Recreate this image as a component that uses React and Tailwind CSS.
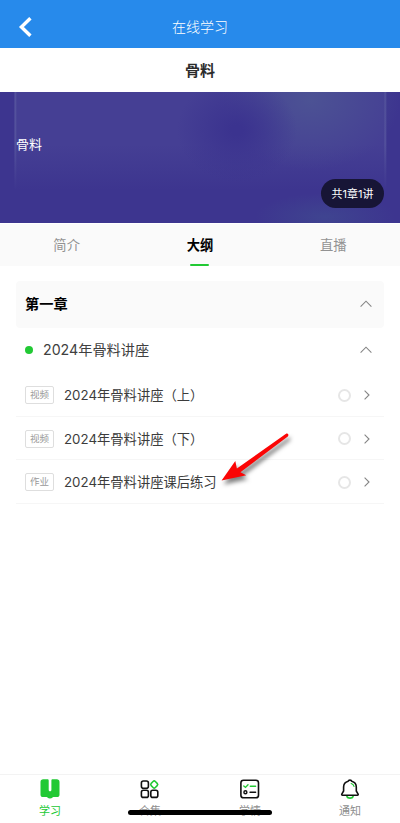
import React from 'react';

const lessons = [
  { tag: '视频', title: '2024年骨料讲座', part: '（上）' },
  { tag: '视频', title: '2024年骨料讲座', part: '（下）' },
  { tag: '作业', title: '2024年骨料讲座课后练习', part: '' },
];

const ChevronUp = () => (
  <svg width="12" height="8" viewBox="0 0 12 8" fill="none" stroke="#858585" strokeWidth="1.1">
    <path d="M0.6 6.6 6 1.2l5.4 5.4" />
  </svg>
);

const ChevronRight = () => (
  <svg width="6" height="10" viewBox="0 0 6 10" fill="none" stroke="#858585" strokeWidth="1.1">
    <path d="M0.6 0.6 5 5 0.6 9.4" />
  </svg>
);

const BookIcon = () => (
  <svg width="22" height="22" viewBox="0 0 22 22">
    <path
      fill="#22c934"
      d="M4.2 1.3h4.3c.7 0 1.2.5 1.2 1.2v9.5c0 1.7 2.7 1.7 2.7 0V2.5c0-.7.5-1.2 1.2-1.2h4.2c1.6 0 2.7 1 2.7 2.6v12.8c0 1.5-1 2.4-2.5 2.4h-3.6c-1 0-1 1.4-3.4 1.4s-2.4-1.4-3.4-1.4H4c-1.5 0-2.5-.9-2.5-2.4V3.9c0-1.6 1.1-2.6 2.7-2.6z"
    />
  </svg>
);

const GridIcon = () => (
  <svg width="22" height="22" viewBox="0 0 22 22" fill="none" stroke="#111" strokeWidth="1.6">
    <rect x="2.4" y="3" width="7" height="7.2" rx="2" />
    <rect x="2.4" y="12.2" width="7" height="7.2" rx="2" />
    <rect x="11.8" y="12.2" width="7" height="7.2" rx="2" />
    <rect x="12.3" y="3.6" width="5.8" height="5.8" rx="1.6" transform="rotate(45 15.2 6.5)" stroke="#22c934" />
  </svg>
);

const ChecklistIcon = () => (
  <svg width="22" height="22" viewBox="0 0 22 22" fill="none" strokeWidth="1.4" strokeLinecap="round">
    <rect x="1.9" y="2.2" width="17.6" height="17.6" rx="2.6" stroke="#111" strokeWidth="1.6" />
    <path d="M4.8 7.9 6.5 9.4 9 6.8M11.3 8.2h5.3" stroke="#22c934" />
    <circle cx="6.4" cy="14.2" r="1.5" stroke="#111" />
    <path d="M11 14.2h5.6" stroke="#111" />
  </svg>
);

const BellIcon = () => (
  <svg width="22" height="22" viewBox="0 0 22 22" fill="none" strokeWidth="1.6" strokeLinecap="round" strokeLinejoin="round">
    <path d="M8 18.6c.7 2 5.3 2 6 0" stroke="#22c934" strokeWidth="1.8" />
    <path d="M9.2 3.2c.3-1.5 3.2-1.5 3.5 0 2.9.7 4.6 2.8 4.6 5.8v4l1.8 3.1c.3.7 0 1.2-.7 1.2H3.5c-.7 0-1-.5-.7-1.2L4.6 13V9c0-3 1.7-5.1 4.6-5.8z" stroke="#111" />
    <path d="M12.2 5.5c1.5.5 2.5 1.4 2.8 2.9" stroke="#22c934" strokeWidth="1.2" />
  </svg>
);

const navItems = [
  { label: '学习', icon: BookIcon, active: true },
  { label: '合集', icon: GridIcon },
  { label: '学情', icon: ChecklistIcon },
  { label: '通知', icon: BellIcon },
];

const App = () => {
  return (
    <div lang="zh-CN" className="relative flex h-[823px] w-[400px] flex-col overflow-hidden bg-white font-['Inter','Noto_Sans_CJK_SC',sans-serif]">
      <header className="grid h-12 shrink-0 grid-cols-3 items-center bg-[#278aeb] pt-[6px] text-white">
        <svg className="ml-[18px]" width="14" height="20" viewBox="0 0 14 20" fill="none" stroke="white" strokeWidth="3.4">
          <path d="M12.4 1.2 3.4 10l9 8.8" />
        </svg>
        <span className="text-center text-[14px] leading-5 font-light">在线学习</span>
      </header>

      <h1 className="flex h-11 shrink-0 items-center justify-center pt-[2px] text-[15px] font-bold text-[#2c2c2c]">骨料</h1>

      <section className="flex h-[131px] shrink-0 flex-col bg-[#3d358f] bg-[radial-gradient(ellipse_60px_52px_at_237px_38px,#3b338f_10%,transparent),radial-gradient(ellipse_90px_70px_at_310px_8px,#4c5294,transparent),radial-gradient(ellipse_70px_24px_at_325px_125px,#3f4490,transparent),linear-gradient(to_bottom,transparent_40%,#3d358f_75%),linear-gradient(to_right,#3d358f_14px,#58579f_15px,#453f94_17px,#453f94_384px,#58579f_385px,#3d358f_387px)] px-4">
        <p className="mt-[42px] text-[13px] leading-5 text-white">骨料</p>
        <span className="mt-[25px] flex h-[29px] w-[63px] shrink-0 items-center justify-center self-end rounded-full bg-[#171536] pt-px text-[11px] text-white">
          共1章1讲
        </span>
      </section>

      <nav className="mt-px grid h-[42px] shrink-0 grid-cols-3 bg-[#fafafa] text-center text-[13.3px] text-[#929292]">
        <span className="pt-[11px] leading-5">简介</span>
        <span className="flex flex-col items-center justify-between pt-[11px] font-bold text-black">
          <span className="leading-5">大纲</span>
          <span className="h-[2px] w-[19px] rounded-full bg-[#22c934]" />
        </span>
        <span className="pt-[11px] leading-5">直播</span>
      </nav>

      <main className="flex-1 px-4 pt-[15px]">
        <div className="flex h-[47px] items-center justify-between rounded-sm bg-[#fafafa] pr-3 pb-px pl-[9px]">
          <h2 className="text-[14.2px] font-bold text-black">第一章</h2>
          <ChevronUp />
        </div>
        <div className="flex h-[45px] items-center justify-between pr-3 pb-px pl-[9px]">
          <div className="flex items-center">
            <span className="mr-[10px] size-2 rounded-full bg-[#22c934]" />
            <h3 className="text-[14.2px] text-[#404040]">2024年骨料讲座</h3>
          </div>
          <ChevronUp />
        </div>
        {lessons.map(lesson => (
          <div key={lesson.title + lesson.part} className="flex h-[43.5px] items-center border-b border-[#f6f6f6] pt-[2px] pr-[14px] pl-[9px]">
            <span className="flex h-[18px] w-[29px] items-center justify-center rounded-xs border border-[#dedede] text-[9.5px] text-[#999]">
              {lesson.tag}
            </span>
            <span className="ml-[10px] flex-1 pt-px text-[13.3px] whitespace-nowrap text-[#3c3c3c]">
              {lesson.title}
              <span className="font-['Noto_Sans_CJK_SC',sans-serif]">{lesson.part}</span>
            </span>
            <span className="mr-[13px] size-[13px] rounded-full border-2 border-[#e6e6e6]" />
            <ChevronRight />
          </div>
        ))}
      </main>

      <footer className="grid h-[49px] shrink-0 grid-cols-4 border-t border-[#f3f3f3]">
        {navItems.map(({ label, icon: Icon, active }) => (
          <div key={label} className={`flex flex-col items-center pt-[3px] text-[11px] ${active ? 'text-[#22c934]' : 'text-[#8e8e8e]'}`}>
            <Icon />
            <span className="mt-[3px] leading-4">{label}</span>
          </div>
        ))}
      </footer>

      {/* home indicator */}
      <div className="absolute top-[810px] left-[128px] h-[5px] w-[144px] rounded-full bg-black" />

      {/* pointer to the homework row */}
      <svg className="absolute top-[425px] left-[212px] drop-shadow-[2px_4px_2px_rgba(0,0,0,0.5)]" width="85" height="70" viewBox="0 0 85 70">
        <path fill="#fb0505" d="M9.6 55.4 23.3 36l1.6 7.4L74.4 8.6c1.6-.8 2.8 1.5 1.4 2.8L28.4 47.2l5.8 3z" />
      </svg>
    </div>
  );
};

export default App;
